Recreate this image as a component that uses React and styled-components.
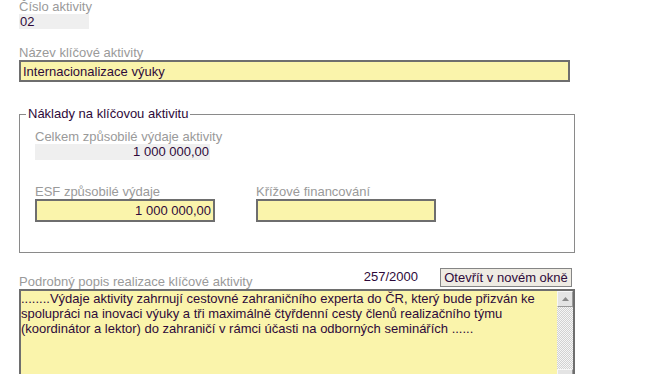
import React from "react";
import styled, { createGlobalStyle } from "styled-components";

const GlobalStyle = createGlobalStyle`
  html, body {
    margin: 0;
    padding: 0;
    overflow: hidden;
    background: #ffffff;
  }
  body {
    font-family: "Liberation Sans", Arial, sans-serif;
    font-size: 13px;
  }
`;

const TEXT = "#2e0a3a";
const YELLOW = "#faf4ab";

const Page = styled.div`
  width: 556px;
  padding-left: 19px;
`;

const Field = styled.div`
  display: flex;
  flex-direction: column;
  align-items: flex-start;
  margin-top: ${(p) => p.$top || 0}px;
`;

const Label = styled.div`
  color: #9a9a9a;
  line-height: 14px;
  height: 14px;
  white-space: nowrap;
`;

const ReadOnly = styled.div`
  box-sizing: border-box;
  width: ${(p) => p.$w}px;
  height: ${(p) => p.$h || 15}px;
  line-height: ${(p) => p.$h || 15}px;
  background: #efefef;
  color: ${TEXT};
  text-align: ${(p) => (p.$right ? "right" : "left")};
  padding: 0 1px;
`;

const TextInput = styled.input`
  box-sizing: border-box;
  width: ${(p) => p.$w}px;
  height: ${(p) => p.$h || 22}px;
  margin: 0;
  padding: 0 2px;
  border: 2px solid #6e6e6e;
  background: ${YELLOW};
  color: ${TEXT};
  font-family: "Liberation Sans", Arial, sans-serif;
  font-size: 13px;
  text-align: ${(p) => (p.$right ? "right" : "left")};
  outline: none;
`;

const Fieldset = styled.fieldset`
  box-sizing: border-box;
  width: 556px;
  margin: 25px 0 0 0;
  padding: 9px 0 30px 0;
  border: 1px solid #8a8a8a;
  min-inline-size: 0;
`;

const Legend = styled.legend`
  margin-left: 6px;
  padding: 0 2px;
  line-height: 14px;
  color: ${TEXT};
`;

const FieldsetBody = styled.div`
  padding-left: 15px;
`;

const Columns = styled.div`
  display: flex;
  gap: 41px;
  margin-top: 25px;
`;

const HeaderRow = styled.div`
  display: flex;
  align-items: flex-end;
  height: 21px;
  margin-top: 15px;
`;

const Counter = styled.div`
  align-self: flex-start;
  margin: 2px 0 0 auto;
  line-height: 14px;
  color: ${TEXT};
`;

const Button = styled.button`
  align-self: flex-start;
  box-sizing: border-box;
  height: 19px;
  width: 132px;
  margin: 0 3px 0 22px;
  padding: 0;
  border: 1px solid #858585;
  background: #eeebe3;
  color: ${TEXT};
  font-family: "Liberation Sans", Arial, sans-serif;
  font-size: 13px;
  line-height: 16px;
`;

const TextArea = styled.div`
  box-sizing: border-box;
  display: flex;
  width: 556px;
  height: 98px;
  border: 2px solid #6e6e6e;
  background: ${YELLOW};
`;

const TextBody = styled.p`
  flex: 1;
  margin: 0;
  padding: 0 4px 0 0;
  line-height: 15px;
  color: ${TEXT};
`;

const ScrollBar = styled.div`
  width: 16px;
  display: flex;
  flex-direction: column;
  justify-content: space-between;
  background: repeating-conic-gradient(#d2d2d2 0 25%, #f6f6f6 0 50%) 0 0 / 2px 2px;
`;

const ScrollButton = styled.div`
  box-sizing: border-box;
  height: 16px;
  display: flex;
  align-items: center;
  justify-content: center;
  background: #e4e4e4;
  border: 1px solid;
  border-color: #f7f7f7 #9a9a9a #9a9a9a #f7f7f7;
`;

const Arrow = ({ down }) => (
  <svg width="7" height="4" viewBox="0 0 7 4">
    <path d={down ? "M0 0H7L3.5 4Z" : "M0 4H7L3.5 0Z"} fill="#8a8a8a" />
  </svg>
);

export default function App() {
  return (
    <>
      <GlobalStyle />
      <Page>
        <Field>
          <Label>Číslo aktivity</Label>
          <ReadOnly $w={70}>02</ReadOnly>
        </Field>

        <Field $top={17}>
          <Label>Název klíčové aktivity</Label>
          <TextInput $w={551} readOnly value="Internacionalizace výuky" />
        </Field>

        <Fieldset>
          <Legend>Náklady na klíčovou aktivitu</Legend>
          <FieldsetBody>
            <Field>
              <Label>Celkem způsobilé výdaje aktivity</Label>
              <ReadOnly $w={175} $h={16} $right>
                1 000 000,00
              </ReadOnly>
            </Field>
            <Columns>
              <Field>
                <Label>ESF způsobilé výdaje</Label>
                <TextInput $w={180} $h={23} $right readOnly value="1 000 000,00" />
              </Field>
              <Field>
                <Label>Křížové financování</Label>
                <TextInput $w={180} $h={23} readOnly value="" />
              </Field>
            </Columns>
          </FieldsetBody>
        </Fieldset>

        <HeaderRow>
          <Label>Podrobný popis realizace klíčové aktivity</Label>
          <Counter>257/2000</Counter>
          <Button>Otevřít v novém okně</Button>
        </HeaderRow>
        <TextArea>
          <TextBody>
            ........Výdaje aktivity zahrnují cestovné zahraničního experta do
            ČR, který bude přizván ke spolupráci na inovaci výuky a tři
            maximálně čtyřdenní cesty členů realizačního týmu (koordinátor a
            lektor) do zahraničí v rámci účasti na odborných seminářích ......
          </TextBody>
          <ScrollBar>
            <ScrollButton>
              <Arrow />
            </ScrollButton>
            <ScrollButton>
              <Arrow down />
            </ScrollButton>
          </ScrollBar>
        </TextArea>
      </Page>
    </>
  );
}
